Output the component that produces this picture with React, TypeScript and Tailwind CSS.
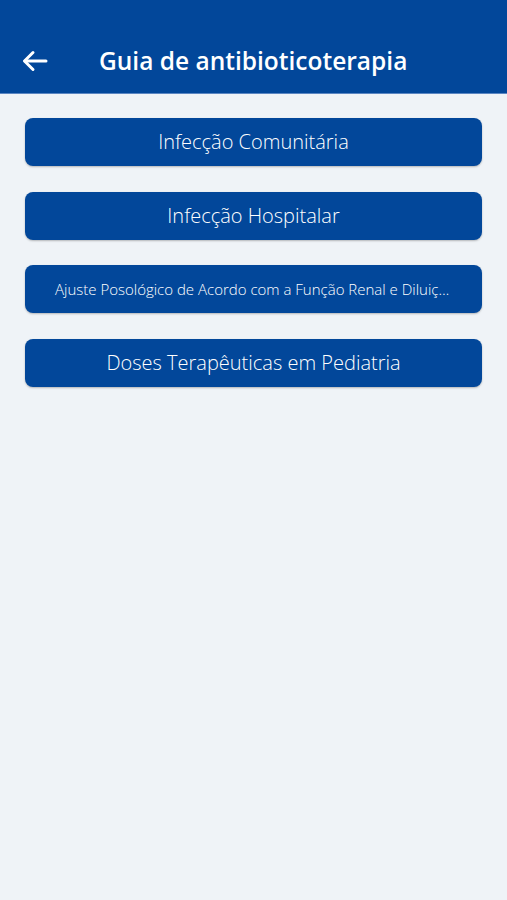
import React from 'react';

const ITEMS = [
  { label: 'Infecção Comunitária', size: 'text-[20px]' },
  { label: 'Infecção Hospitalar', size: 'text-[20px]' },
  { label: 'Ajuste Posológico de Acordo com a Função Renal e Diluição', size: 'text-[15px]' },
  { label: 'Doses Terapêuticas em Pediatria', size: 'text-[20px]' },
];

const App: React.FC = () => {
  return (
    <div className="min-h-[900px] bg-[#eff3f7] font-['Open_Sans',sans-serif]">
      {/* Header */}
      <header className="h-[94px] bg-[#02479a] flex items-end pb-[17px] pl-[22px] border-b border-[#5b86c2]">
        <svg width="26" height="22" viewBox="0 0 26 22" fill="none" stroke="white" strokeWidth="3" strokeLinecap="round" strokeLinejoin="round" className="mb-[4px]">
          <path d="M24 11H3" />
          <path d="M11 2.5L2.5 11l8.5 8.5" />
        </svg>
        <h1 className="ml-[51px] text-white text-[24.5px] font-semibold leading-[30px]">
          Guia de antibioticoterapia
        </h1>
      </header>

      {/* Menu */}
      <div className="flex flex-col gap-[25.5px] px-[25px] pt-[24px]">
        {ITEMS.map((item) => (
          <button
            key={item.label}
            className={`h-[48px] w-full rounded-[8px] bg-[#02479a] text-white font-light shadow-[0_1px_2px_rgba(0,0,0,0.25)] px-[30px] truncate ${item.size}`}
          >
            {item.label}
          </button>
        ))}
      </div>
    </div>
  );
};

export default App;
